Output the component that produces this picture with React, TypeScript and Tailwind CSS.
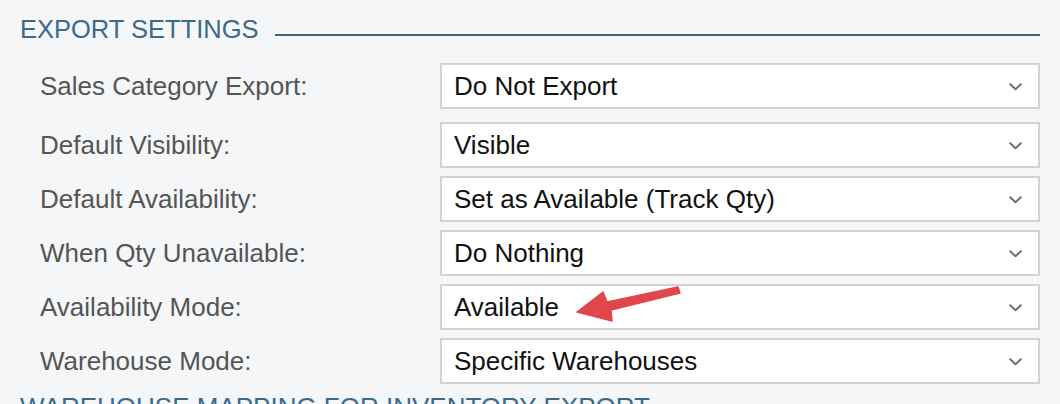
const rows = [
  { label: "Sales Category Export:", value: "Do Not Export" },
  { label: "Default Visibility:", value: "Visible" },
  { label: "Default Availability:", value: "Set as Available (Track Qty)" },
  { label: "When Qty Unavailable:", value: "Do Nothing" },
  { label: "Availability Mode:", value: "Available" },
  { label: "Warehouse Mode:", value: "Specific Warehouses" },
];

function SelectBox({ value }: { value: string }) {
  return (
    <div className="flex h-[46px] w-[600px] items-center justify-between border-2 border-[#d3d3d3] bg-white pl-[12px] pr-[16px]">
      <span className="text-[26px] leading-none text-[#111]">{value}</span>
      <svg width="13" height="8" viewBox="0 0 13 8" className="mt-[2px]">
        <polyline
          points="1.2,1.2 6.5,6.3 11.8,1.2"
          fill="none"
          stroke="#6f6f6f"
          strokeWidth="2"
          strokeLinecap="round"
          strokeLinejoin="round"
        />
      </svg>
    </div>
  );
}

export default function App() {
  return (
    <div
      className="relative h-[404px] w-[1060px] overflow-hidden bg-[#f4f6f8] px-[20px] pt-[14px]"
      style={{ fontFamily: '"Liberation Sans", Arial, sans-serif' }}
    >
      <div className="flex h-[30px] items-start">
        <span className="text-[25.5px] leading-[30px] text-[#3b6a8c]">EXPORT SETTINGS</span>
        <div className="ml-[16px] mt-[20px] h-[2px] flex-1 bg-[#3d6580]" />
      </div>

      <div className="mt-[19px] flex flex-col">
        {rows.map((row, i) => (
          <div
            key={row.label}
            className={`flex items-center ${i === 0 ? "" : i === 1 ? "mt-[13px]" : "mt-[8px]"}`}
          >
            <span className="w-[420px] pl-[20px] text-[26px] leading-none text-[#555]">
              {row.label}
            </span>
            <SelectBox value={row.value} />
          </div>
        ))}
      </div>

      <div className="mt-[8px] whitespace-nowrap text-[26px] leading-[30px] text-[#3b6a8c]">
        WAREHOUSE MAPPING FOR INVENTORY EXPORT
      </div>

      {/* annotation arrow */}
      <svg
        className="absolute left-0 top-0"
        width="1060"
        height="404"
        viewBox="0 0 1060 404"
      >
        <polygon
          points="577,312 603,292 607,302 678,287 680,293 611,310 612,321"
          fill="#e0474c"
          stroke="#e0474c"
          strokeWidth="1.5"
          strokeLinejoin="round"
        />
      </svg>
    </div>
  );
}
